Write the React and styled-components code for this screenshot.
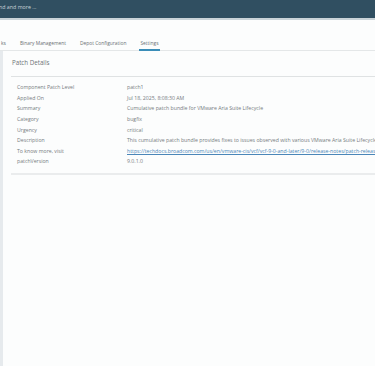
import React from "react";
import styled, { createGlobalStyle } from "styled-components";

const rows = [
  { label: "Component Patch Level", value: "patch1" },
  { label: "Applied On", value: "Jul 18, 2025, 8:08:30 AM" },
  { label: "Summary", value: "Cumulative patch bundle for VMware Aria Suite Lifecycle" },
  { label: "Category", value: "bugfix" },
  { label: "Urgency", value: "critical" },
  {
    label: "Description",
    value:
      "This cumulative patch bundle provides fixes to issues observed with various VMware Aria Suite Lifecycle components",
  },
  {
    label: "To know more, visit",
    value:
      "https://techdocs.broadcom.com/us/en/vmware-cis/vcf/vcf-9-0-and-later/9-0/release-notes/patch-releases-9-0-0-0.html",
    link: true,
  },
  { label: "patchVersion", value: "9.0.1.0" },
];

const tabs = ["ks", "Binary Management", "Depot Configuration", "Settings"];

const App = () => {
  return (
    <>
      <GlobalStyle />
      <Page>
        <Header>
          <SearchHint>nd and more ...</SearchHint>
        </Header>
        <TabBar>
          {tabs.map((t) => (
            <Tab key={t} $active={t === "Settings"}>
              {t}
            </Tab>
          ))}
        </TabBar>
        <Body>
          <SideStrip />
          <Content>
            <Card>
              <CardTitle>Patch Details</CardTitle>
              <Rows>
                {rows.map((r) => (
                  <Row key={r.label}>
                    <Label>{r.label}</Label>
                    {r.link ? <LinkValue href="#">{r.value}</LinkValue> : <Value>{r.value}</Value>}
                  </Row>
                ))}
              </Rows>
            </Card>
          </Content>
        </Body>
      </Page>
    </>
  );
};

export default App;

const GlobalStyle = createGlobalStyle`
  html, body {
    margin: 0;
    padding: 0;
    overflow: hidden;
    background: #fcfdfd;
  }
  body {
    font-family: "Open Sans", "Liberation Sans", sans-serif;
  }
`;

const Page = styled.div`
  width: 375px;
  height: 366px;
  display: flex;
  flex-direction: column;
  background: #fcfdfd;
  overflow: hidden;
`;

const Header = styled.div`
  height: 18px;
  flex-shrink: 0;
  background: #304f61;
  border-bottom: 2px solid #c9d3d8;
  display: flex;
  align-items: center;
`;

const SearchHint = styled.span`
  font-size: 5.3px;
  color: #c9d3d9;
  margin-left: -1px;
  margin-top: -4px;
  white-space: nowrap;
`;

const TabBar = styled.div`
  height: 30px;
  flex-shrink: 0;
  display: flex;
  align-items: flex-end;
  gap: 12px;
  border-bottom: 1px solid #e4e7e8;
`;

const Tab = styled.div`
  font-size: 4.9px;
  color: #6a7074;
  white-space: nowrap;
  padding: 0 1px 3px;
  margin-bottom: -1px;
  border-bottom: 2px solid ${(p) => (p.$active ? "#3a8db8" : "transparent")};
`;

const Body = styled.div`
  flex: 1;
  display: flex;
`;

const SideStrip = styled.div`
  width: 3px;
  flex-shrink: 0;
  background: #e6eaed;
`;

const Content = styled.div`
  flex: 1;
  padding: 0 0 0 8px;
  min-width: 0;
`;

const Card = styled.div`
  border-bottom: 2px solid #eaeced;
  padding-bottom: 6px;
`;

const CardTitle = styled.div`
  font-size: 6.2px;
  color: #6e7478;
  padding: 7px 1px 9px;
  border-bottom: 1px solid #dfe2e3;
`;

const Rows = styled.div`
  display: flex;
  flex-direction: column;
  padding: 5px 0 0 6px;
`;

const Row = styled.div`
  display: grid;
  grid-template-columns: 110px 1fr;
  height: 10.6px;
  align-items: center;
  font-size: 5.2px;
  white-space: nowrap;
`;

const Label = styled.span`
  color: #767b7f;
`;

const Value = styled.span`
  color: #767b7f;
`;

const LinkValue = styled.a`
  color: #4a86b8;
  text-decoration: underline;
`;
